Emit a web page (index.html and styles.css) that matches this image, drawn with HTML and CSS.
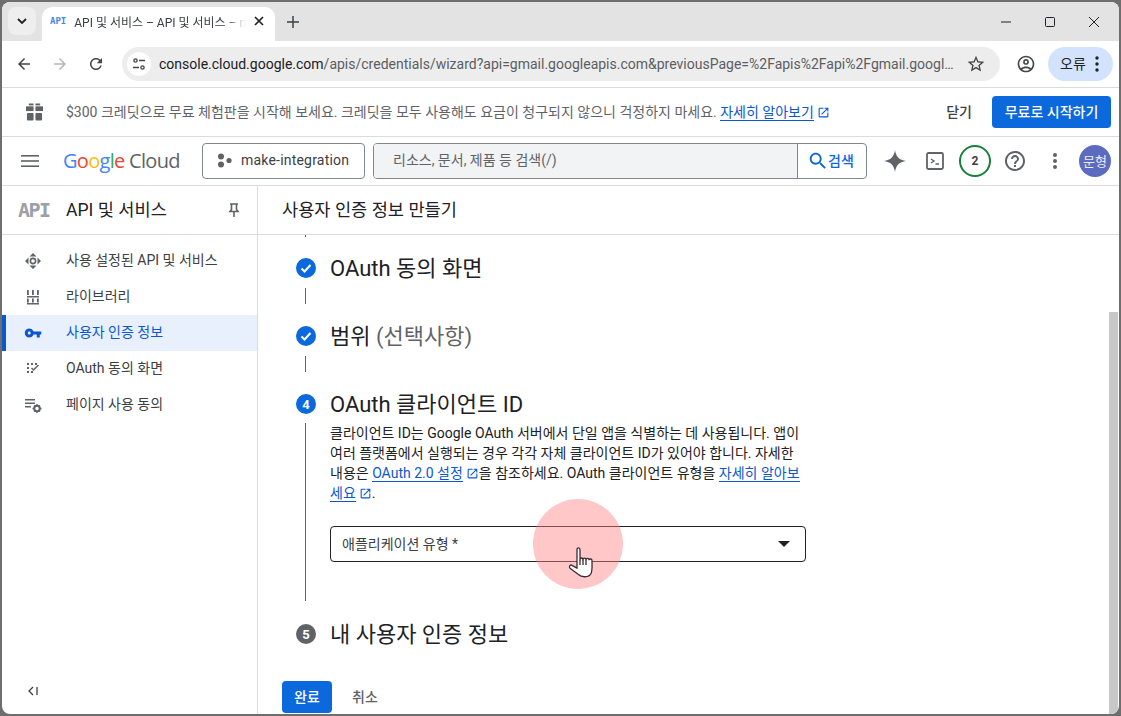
FILE: index.html
```html
<!DOCTYPE html>
<html lang="ko">

<head>
    <meta charset="UTF-8" />
    <meta name="viewport" content="width=device-width, initial-scale=1" />
    <title>API 및 서비스</title>
    <link rel="stylesheet" href="styles.css">
</head>

<body>
    <div class="window">
        <div class="tabstrip">
            <button class="tab-search">
                <svg width="12" height="12" viewBox="0 0 12 12"><path d="M2 4l4 4 4-4" fill="none" stroke="#202124" stroke-width="1.8"/></svg>
            </button>
            <div class="tab">
                <span class="api-mark tab-mark">API</span>
                <span class="tab-title">API 및 서비스 – API 및 서비스 – make-integration</span>
                <svg width="10" height="10" viewBox="0 0 10 10"><path d="M1 1l8 8M9 1l-8 8" stroke="#202124" stroke-width="1.7"/></svg>
            </div>
            <svg class="new-tab" width="12" height="12" viewBox="0 0 12 12"><path d="M6 0v12M0 6h12" stroke="#3c4043" stroke-width="1.5"/></svg>
            <div class="win-controls">
                <svg width="12" height="12" viewBox="0 0 12 12"><path d="M1 6h10" stroke="#202124"/></svg>
                <svg width="12" height="12" viewBox="0 0 12 12"><rect x="1.5" y="1.5" width="9" height="9" rx="1" fill="none" stroke="#202124"/></svg>
                <svg width="12" height="12" viewBox="0 0 12 12"><path d="M1 1l10 10M11 1L1 11" stroke="#202124"/></svg>
            </div>
        </div>

        <div class="toolbar">
            <svg class="nav-icon" width="18" height="18" viewBox="0 0 24 24" fill="#444746"><path d="M20 11H7.83l5.59-5.59L12 4l-8 8 8 8 1.41-1.41L7.83 13H20v-2z"/></svg>
            <svg class="nav-icon" width="18" height="18" viewBox="0 0 24 24" fill="#b4b6b8"><path d="M4 11h12.17l-5.59-5.59L12 4l8 8-8 8-1.41-1.41L16.17 13H4v-2z"/></svg>
            <svg class="nav-icon" width="18" height="18" viewBox="0 0 24 24" fill="#444746"><path d="M17.65 6.35C16.2 4.9 14.21 4 12 4c-4.42 0-7.99 3.58-7.99 8s3.57 8 7.99 8c3.73 0 6.84-2.55 7.73-6h-2.08c-.82 2.33-3.04 4-5.65 4-3.31 0-6-2.69-6-6s2.69-6 6-6c1.66 0 3.14.69 4.22 1.78L13 11h7V4l-2.35 2.35z"/></svg>
            <div class="omnibox">
                <span class="site-chip">
                    <svg width="14" height="14" viewBox="0 0 14 14" fill="none" stroke="#444746" stroke-width="1.4"><circle cx="3.5" cy="3.5" r="1.6"/><path d="M7 3.5h6M1 10.5h6"/><circle cx="10.5" cy="10.5" r="1.6"/></svg>
                </span>
                <span class="url"><span class="url-host">console.cloud.google.com</span>/apis/credentials/wizard?api=gmail.googleapis.com&amp;previousPage=%2Fapis%2Fapi%2Fgmail.googleapis.com</span>
                <svg class="star" width="20" height="20" viewBox="0 0 24 24" fill="#444746"><path d="M22 9.24l-7.19-.62L12 2 9.19 8.63 2 9.24l5.46 4.73L5.82 21 12 17.27 18.18 21l-1.63-7.03L22 9.24zM12 15.4l-3.76 2.27 1-4.28-3.32-2.88 4.38-.38L12 6.1l1.71 4.04 4.38.38-3.32 2.88 1 4.28L12 15.4z"/></svg>
            </div>
            <svg class="profile" width="20" height="20" viewBox="0 0 24 24" fill="#444746"><path d="M12 2C6.48 2 2 6.48 2 12s4.48 10 10 10 10-4.48 10-10S17.52 2 12 2zM7.35 18.5C8.66 17.56 10.26 17 12 17s3.34.56 4.65 1.5c-1.31.94-2.91 1.5-4.65 1.5s-3.34-.56-4.65-1.5zm10.79-1.38C16.45 15.8 14.32 15 12 15s-4.45.8-6.14 2.12C4.7 15.73 4 13.95 4 12c0-4.42 3.58-8 8-8s8 3.58 8 8c0 1.95-.7 3.73-1.86 5.12zM12 6c-1.93 0-3.5 1.57-3.5 3.5S10.07 13 12 13s3.5-1.57 3.5-3.5S13.93 6 12 6zm0 5c-.83 0-1.5-.67-1.5-1.5S11.17 8 12 8s1.5.67 1.5 1.5S12.83 11 12 11z"/></svg>
            <div class="error-pill">
                <span>오류</span>
                <svg width="4" height="16" viewBox="0 0 4 16" fill="#202124"><circle cx="2" cy="2" r="1.7"/><circle cx="2" cy="8" r="1.7"/><circle cx="2" cy="14" r="1.7"/></svg>
            </div>
        </div>

        <div class="banner">
            <svg class="gift" width="17" height="18" viewBox="0 0 18 18" fill="#5f6368"><rect x="0" y="3" width="8" height="5"/><rect x="10" y="3" width="8" height="5"/><rect x="1" y="10" width="7" height="8" rx="1"/><rect x="10" y="10" width="7" height="8" rx="1"/><rect x="3" y="0" width="5" height="2"/><rect x="10" y="0" width="5" height="2"/></svg>
            <p class="banner-text">$300 크레딧으로 무료 체험판을 시작해 보세요. 크레딧을 모두 사용해도 요금이 청구되지 않으니 걱정하지 마세요. <a href="#" class="link">자세히 알아보기</a><svg class="ext" width="13" height="13" viewBox="0 0 24 24" fill="#0b57d0"><path d="M19 19H5V5h7V3H5c-1.11 0-2 .9-2 2v14c0 1.1.89 2 2 2h14c1.1 0 2-.9 2-2v-7h-2v7zM14 3v2h3.59l-9.83 9.83 1.41 1.41L19 6.41V10h2V3h-7z"/></svg></p>
            <span class="banner-close">닫기</span>
            <button class="btn-primary banner-btn">무료로 시작하기</button>
        </div>

        <header class="console-header">
            <svg class="menu" width="18" height="12" viewBox="0 0 18 12" fill="#5f6368"><rect width="18" height="1.6"/><rect y="5.2" width="18" height="1.6"/><rect y="10.4" width="18" height="1.6"/></svg>
            <div class="logo"><span class="g-blue">G</span><span class="g-red">o</span><span class="g-yellow">o</span><span class="g-blue">g</span><span class="g-green">l</span><span class="g-red">e</span><span class="logo-cloud"> Cloud</span></div>
            <div class="project">
                <svg width="15" height="15" viewBox="0 0 15 15" fill="#5f6368"><circle cx="4" cy="3.5" r="3"/><circle cx="4" cy="11.5" r="3"/><circle cx="12" cy="7.5" r="2.6"/></svg>
                <span>make-integration</span>
            </div>
            <div class="search">
                <span class="search-input">리소스, 문서, 제품 등 검색(/)</span>
                <span class="search-btn">
                    <svg width="22" height="22" viewBox="0 0 24 24" fill="#0b68dd"><path d="M15.5 14h-.79l-.28-.27C15.41 12.59 16 11.11 16 9.5 16 5.91 13.09 3 9.5 3S3 5.91 3 9.5 5.91 16 9.5 16c1.61 0 3.09-.59 4.23-1.57l.27.28v.79l5 4.99L20.49 19l-4.99-5zm-6 0C7.01 14 5 11.99 5 9.5S7.01 5 9.5 5 14 7.01 14 9.5 11.99 14 9.5 14z"/></svg>
                    <span class="search-label">검색</span>
                </span>
            </div>
            <div class="header-icons">
                <svg width="24" height="24" viewBox="0 0 24 24" fill="#5f6368"><path d="M12 1C12.8 7.5 16.5 11.2 23 12 16.5 12.8 12.8 16.5 12 23 11.2 16.5 7.5 12.8 1 12 7.5 11.2 11.2 7.5 12 1Z"/></svg>
                <svg width="18" height="18" viewBox="0 0 18 18" fill="none" stroke="#5f6368"><rect x="1" y="1" width="16" height="16" rx="1.5" stroke-width="1.8"/><path d="M5 7l3 2-3 2" stroke-width="1.4"/><path d="M9.5 12H13" stroke-width="1.4"/></svg>
                <span class="badge">2</span>
                <svg width="24" height="24" viewBox="0 0 24 24" fill="#5f6368"><path d="M11 18h2v-2h-2v2zm1-16C6.48 2 2 6.48 2 12s4.48 10 10 10 10-4.48 10-10S17.52 2 12 2zm0 18c-4.41 0-8-3.59-8-8s3.59-8 8-8 8 3.59 8 8-3.59 8-8 8zm0-14c-2.21 0-4 1.79-4 4h2c0-1.1.9-2 2-2s2 .9 2 2c0 2-3 1.75-3 5h2c0-2.25 3-2.5 3-5 0-2.21-1.79-4-4-4z"/></svg>
                <svg width="4" height="16" viewBox="0 0 4 16" fill="#5f6368"><circle cx="2" cy="2" r="2"/><circle cx="2" cy="8" r="2"/><circle cx="2" cy="14" r="2"/></svg>
                <span class="avatar">문형</span>
            </div>
        </header>

        <div class="body-row">
            <aside class="sidebar">
                <div class="side-head">
                    <span class="api-mark side-mark">API</span>
                    <span class="side-title">API 및 서비스</span>
                    <svg class="pin" width="12" height="14" viewBox="0 0 12 14" fill="none" stroke="#5f6368" stroke-width="1.6"><path d="M2 1h8M3.500 1v5.500L2 8.500h8L8.500 6.500V1M6 8.500V14"/></svg>
                </div>
                <nav class="side-nav">
                    <a class="nav-item" href="#">
                        <svg width="18" height="18" viewBox="0 0 18 18" fill="#5f6368"><path d="M9 1l3.500 3.500h-7zM9 17l-3.500-3.500h7zM1 9l3.500-3.500v7zM17 9l-3.500 3.500v-7z"/><circle cx="9" cy="9" r="2.600" fill="none" stroke="#5f6368" stroke-width="1.600"/></svg>
                        <span>사용 설정된 API 및 서비스</span>
                    </a>
                    <a class="nav-item" href="#">
                        <svg width="18" height="18" viewBox="0 0 18 18" fill="#5f6368"><rect x="3" y="2" width="1.800" height="5"/><rect x="8" y="2" width="1.800" height="5"/><rect x="13" y="2" width="1.800" height="5"/><rect x="3" y="8" width="12" height="1.500"/><rect x="3" y="10.500" width="1.800" height="4"/><rect x="8" y="10.500" width="1.800" height="4"/><rect x="13" y="10.500" width="1.800" height="4"/><rect x="3" y="15" width="12" height="1.500"/></svg>
                        <span>라이브러리</span>
                    </a>
                    <a class="nav-item active" href="#">
                        <svg width="18" height="18" viewBox="0 0 24 24" fill="#0b57d0"><path d="M12.650 10C11.830 7.670 9.610 6 7 6c-3.310 0-6 2.690-6 6s2.690 6 6 6c2.610 0 4.830-1.670 5.650-4H17v4h4v-4h2v-4H12.650zM7 14c-1.100 0-2-.900-2-2s.900-2 2-2 2 .900 2 2-.900 2-2 2z"/></svg>
                        <span>사용자 인증 정보</span>
                    </a>
                    <a class="nav-item" href="#">
                        <svg width="18" height="18" viewBox="0 0 18 18" fill="#5f6368"><rect x="3" y="3" width="2" height="2"/><rect x="7" y="3" width="2" height="2"/><rect x="11" y="3" width="2" height="2"/><rect x="3" y="7" width="2" height="2"/><rect x="3" y="11" width="2" height="2"/><rect x="7" y="11" width="2" height="2"/><path d="M7.500 8l2 2 5-5" fill="none" stroke="#5f6368" stroke-width="1.500"/></svg>
                        <span>OAuth 동의 화면</span>
                    </a>
                    <a class="nav-item" href="#">
                        <svg width="18" height="18" viewBox="0 0 18 18" fill="#5f6368"><rect x="1" y="3" width="10" height="1.500"/><rect x="1" y="6.500" width="10" height="1.500"/><rect x="1" y="10" width="6" height="1.500"/><circle cx="13" cy="12.500" r="2.800" fill="none" stroke="#5f6368" stroke-width="2"/><path d="M13 8v2M13 15v2M8.500 12.500h2M15.500 12.500h2M10 9.500l1.200 1.200M14.800 14.300l1.200 1.200M10 15.500l1.200-1.200M14.800 10.700l1.200-1.200" stroke="#5f6368" stroke-width="1.300"/></svg>
                        <span>페이지 사용 동의</span>
                    </a>
                </nav>
                <svg class="collapse" width="10" height="10" viewBox="0 0 10 10" fill="none" stroke="#3c4043" stroke-width="1.300"><path d="M5 1L1 5l4 4M9 1v8"/></svg>
            </aside>

            <main class="main">
                <div class="page-head">사용자 인증 정보 만들기</div>
                <div class="stepper">
                    <span class="line line-top"></span>
                    <div class="step-head">
                        <span class="step-icon done"><svg width="14" height="14" viewBox="0 0 14 14"><path d="M2.500 7.500l3 3 6-6.500" fill="none" stroke="#fff" stroke-width="2"/></svg></span>
                        <h2>OAuth 동의 화면</h2>
                    </div>
                    <span class="line line-short"></span>
                    <div class="step-head">
                        <span class="step-icon done"><svg width="14" height="14" viewBox="0 0 14 14"><path d="M2.500 7.500l3 3 6-6.500" fill="none" stroke="#fff" stroke-width="2"/></svg></span>
                        <h2>범위 <span class="optional">(선택사항)</span></h2>
                    </div>
                    <span class="line line-short"></span>
                    <div class="step-head">
                        <span class="step-icon done">4</span>
                        <h2>OAuth 클라이언트 ID</h2>
                    </div>
                    <div class="step-body">
                        <p class="step-text">클라이언트 ID는 Google OAuth 서버에서 단일 앱을 식별하는 데 사용됩니다. 앱이 여러 플랫폼에서 실행되는 경우 각각 자체 클라이언트 ID가 있어야 합니다. 자세한 내용은 <a href="#" class="link">OAuth 2.0 설정</a><svg class="ext" width="13" height="13" viewBox="0 0 24 24" fill="#0b57d0"><path d="M19 19H5V5h7V3H5c-1.110 0-2 .900-2 2v14c0 1.100.890 2 2 2h14c1.100 0 2-.900 2-2v-7h-2v7zM14 3v2h3.590l-9.830 9.830 1.410 1.410L19 6.410V10h2V3h-7z"/></svg>을 참조하세요. OAuth 클라이언트 유형을 <a href="#" class="link">자세히 알아보세요</a><svg class="ext" width="13" height="13" viewBox="0 0 24 24" fill="#0b57d0"><path d="M19 19H5V5h7V3H5c-1.110 0-2 .900-2 2v14c0 1.100.890 2 2 2h14c1.100 0 2-.900 2-2v-7h-2v7zM14 3v2h3.590l-9.830 9.830 1.410 1.410L19 6.410V10h2V3h-7z"/></svg>.</p>
                        <div class="select">
                            <span class="select-label">애플리케이션 유형 *</span>
                            <span class="caret"></span>
                        </div>
                    </div>
                    <div class="step-head step-last">
                        <span class="step-icon pending">5</span>
                        <h2>내 사용자 인증 정보</h2>
                    </div>
                </div>
                <div class="actions">
                    <button class="btn-primary">완료</button>
                    <span class="btn-text">취소</span>
                </div>
            </main>
        </div>

        <div class="scrollbar"></div>

        <div class="click-ring"></div>
        <svg class="hand" width="26" height="37" viewBox="0 0 26 35" preserveAspectRatio="none" fill="#fff" stroke="#3c2a2e" stroke-width="1.300" stroke-linejoin="round"><path d="M9 21V3.500C9 1.200 12 1.200 12 3.500V13c0-2.200 3-2.200 3 0 0-2 3-2 3 0 0-1.800 3-1.800 3 0 .8-1.200 3-1 3 1 0 4 .5 9-1 12-2 4-9.500 4-12.500 1L2 21c-1.500-2 .5-4 2.500-2.500z"/><path d="M12 13v5M15 13v5M18 13v5" fill="none"/></svg>
    </div>
</body>

</html>
```

FILE: styles.css
```css
* {
    box-sizing: border-box;
}

html,
body {
    margin: 0;
    height: 100%;
    overflow: hidden;
}

body {
    background-color: #6e6e6e;
    font-family: Roboto, "Noto Sans CJK KR", sans-serif;
    color: #202124;
}

h2,
p {
    margin: 0;
    font-weight: 400;
}

a {
    text-decoration: none;
}

button {
    border: none;
    font-family: inherit;
}

.window {
    position: relative;
    width: 1117px;
    height: 712px;
    margin: 2px;
    background-color: #fff;
    border-radius: 8px;
    overflow: hidden;
}

/* browser tabs */

.tabstrip {
    display: flex;
    align-items: center;
    height: 39px;
    padding: 5px 0 0 6px;
    background-color: #e3e3e3;
}

.tab-search {
    display: flex;
    align-items: center;
    justify-content: center;
    width: 28px;
    height: 28px;
    margin-top: -6px;
    background-color: #eeeeee;
    border-radius: 8px;
}

.tab {
    display: flex;
    align-items: center;
    gap: 8px;
    width: 233px;
    height: 34px;
    margin-left: 6px;
    padding: 0 11px 6px 8px;
    background-color: #fff;
    border-radius: 10px 10px 0 0;
}

.tab-title {
    flex: 1;
    overflow: hidden;
    white-space: nowrap;
    font-size: 12px;
    color: #3c4043;
    -webkit-mask-image: linear-gradient(to right, #000 88%, transparent);
    mask-image: linear-gradient(to right, #000 88%, transparent);
}

.api-mark {
    font-family: "DejaVu Sans Mono", monospace;
    font-weight: 700;
}

.tab-mark {
    font-size: 9px;
    color: #4285f4;
}

.new-tab {
    margin: -4px 0 0 12px;
}

.win-controls {
    display: flex;
    gap: 32px;
    margin: -4px 19px 0 auto;
}

/* address bar */

.toolbar {
    display: flex;
    align-items: center;
    height: 47px;
    padding: 0 6px 1px 13px;
    background-color: #fff;
    border-bottom: 1px solid #dadce0;
}

.nav-icon {
    margin-right: 18px;
}

.omnibox {
    display: flex;
    align-items: center;
    width: 878px;
    height: 34px;
    margin-left: -1px;
    padding: 0 14px 0 5px;
    background-color: #eeedee;
    border-radius: 17px;
}

.site-chip {
    display: flex;
    flex: none;
    align-items: center;
    justify-content: center;
    width: 24px;
    height: 24px;
    margin-right: 8px;
    background-color: #fff;
    border-radius: 50%;
}

.url {
    flex: 1;
    overflow: hidden;
    white-space: nowrap;
    text-overflow: ellipsis;
    font-size: 14px;
    color: #5b5e61;
}

.url-host {
    color: #202124;
}

.star {
    flex: none;
    margin-left: 10px;
}

.profile {
    margin-left: 16px;
}

.error-pill {
    display: flex;
    align-items: center;
    justify-content: space-between;
    width: 65px;
    height: 34px;
    margin-left: 12px;
    padding: 0 14px 0 12px;
    background-color: #d3e3fd;
    border-radius: 17px;
    font-size: 14px;
}

.error-pill span {
    margin-bottom: 2px;
}

/* free trial banner */

.banner {
    display: flex;
    align-items: center;
    height: 49px;
    padding: 0 8px 0 24px;
    border-bottom: 1px solid #dadce0;
}

.gift {
    flex: none;
}

.banner-text {
    margin: 0 0 3px 23px;
    font-size: 14px;
    color: #5f6368;
}

.link {
    color: #0b57d0;
    border-bottom: 1px solid #0b57d0;
}

.ext {
    margin-left: 3px;
    vertical-align: -2px;
}

.banner-close {
    margin: 0 0 3px auto;
    font-size: 14px;
    font-weight: 500;
    color: #3c4043;
}

.btn-primary {
    height: 32px;
    padding: 0 0 3px;
    background-color: #0b68dd;
    border-radius: 4px;
    font-size: 14px;
    font-weight: 500;
    color: #fff;
}

.banner-btn {
    width: 119px;
    margin-left: 20px;
}

/* console header */

.console-header {
    display: flex;
    align-items: center;
    height: 49px;
    border-bottom: 1px solid #dadce0;
}

.menu {
    margin-left: 19px;
}

.logo {
    width: 139px;
    margin: 0 0 2px 24px;
    font-family: "Open Sans", sans-serif;
    font-size: 20px;
    letter-spacing: -0.7px;
    white-space: pre;
}

.g-blue {
    color: #4285f4;
}

.g-red {
    color: #ea4335;
}

.g-yellow {
    color: #fbbc04;
}

.g-green {
    color: #34a853;
}

.logo-cloud {
    color: #5f6368;
}

.project {
    display: flex;
    align-items: center;
    gap: 9px;
    width: 163px;
    height: 36px;
    padding: 0 0 2px 14px;
    border: 1px solid #80868b;
    border-radius: 4px;
    font-size: 14px;
    letter-spacing: 0.2px;
    color: #3c4043;
}

.search {
    display: flex;
    width: 494px;
    height: 36px;
    margin-left: 8px;
    border: 1px solid #80868b;
    border-radius: 4px;
    overflow: hidden;
}

.search-input {
    flex: 1;
    padding: 5px 0 0 19px;
    background-color: #f1f3f4;
    font-size: 14px;
    color: #5f6368;
}

.search-btn {
    display: flex;
    align-items: center;
    width: 69px;
    padding-left: 9px;
    border-left: 1px solid #80868b;
    font-size: 14px;
    font-weight: 500;
    color: #0b68dd;
}

.search-label {
    margin: 0 0 2px -1px;
}

.header-icons {
    display: grid;
    grid-template-columns: repeat(6, 40px);
    align-items: center;
    justify-items: center;
    margin-left: 8px;
}

.badge {
    display: flex;
    align-items: center;
    justify-content: center;
    width: 32px;
    height: 32px;
    border: 2px solid #188038;
    border-radius: 50%;
    font-size: 12px;
    font-weight: 700;
    color: #3c4043;
}

.avatar {
    display: flex;
    align-items: center;
    justify-content: center;
    width: 32px;
    height: 32px;
    padding-bottom: 2px;
    background-color: #5c6bc0;
    border-radius: 50%;
    font-size: 13px;
    color: #eceefa;
}

/* layout below header */

.body-row {
    display: flex;
    height: 528px;
}

.sidebar {
    position: relative;
    width: 256px;
    border-right: 1px solid #dadce0;
}

.side-head {
    display: flex;
    align-items: center;
    height: 49px;
    padding-left: 16px;
    border-bottom: 1px solid #dadce0;
}

.side-mark {
    width: 32px;
    font-size: 20px;
    letter-spacing: -1.5px;
    color: #9aa0a6;
}

.side-title {
    margin: 0 0 4px 16px;
    font-size: 17.6px;
}

.pin {
    margin-left: auto;
    margin-right: 17px;
}

.side-nav {
    padding-top: 8px;
}

.nav-item {
    display: flex;
    align-items: center;
    height: 36px;
    padding-left: 22px;
    font-size: 14px;
    color: #3c4043;
}

.nav-item span {
    margin: 0 0 4px 24px;
}

.nav-item.active {
    background-color: #e8f0fe;
    border-left: 4px solid #0b57d0;
    padding-left: 18px;
    color: #0b57d0;
}

.collapse {
    position: absolute;
    left: 26px;
    bottom: 18px;
}

.main {
    flex: 1;
    overflow: hidden;
}

.page-head {
    display: flex;
    align-items: center;
    height: 49px;
    padding: 0 0 4px 24px;
    border-bottom: 1px solid #dadce0;
    font-size: 17.6px;
}

/* stepper */

.stepper {
    padding-left: 38px;
}

.step-head {
    display: flex;
    align-items: center;
    height: 40px;
}

.step-head h2 {
    margin: -5px 0 0 14px;
    font-size: 22px;
}

.optional {
    color: #5f6368;
}

.step-icon {
    display: flex;
    align-items: center;
    justify-content: center;
    width: 20px;
    height: 20px;
    border-radius: 50%;
    font-size: 13px;
    font-weight: 700;
    color: #fff;
}

.step-icon.done {
    background-color: #0b68dd;
}

.step-icon.pending {
    background-color: #5f6368;
}

.line {
    display: block;
    width: 1px;
    margin-left: 9px;
    background-color: #5f6368;
}

.line-top {
    height: 2px;
    margin-bottom: 11px;
}

.line-short {
    height: 16px;
    margin-bottom: 12px;
}

.step-body {
    height: 178px;
    margin-left: 9px;
    padding-left: 24px;
    border-left: 1px solid #5f6368;
}

.step-text {
    width: 472px;
    margin-top: -1px;
    font-size: 14px;
    line-height: 20px;
    color: #202124;
}

.select {
    display: flex;
    align-items: center;
    justify-content: space-between;
    width: 476px;
    height: 36px;
    margin-top: 23px;
    padding: 0 15px 0 11px;
    border: 1px solid #202124;
    border-radius: 4px;
    font-size: 14px;
    color: #3c4043;
}

.select-label {
    margin-bottom: 3px;
}

.caret {
    width: 0;
    height: 0;
    border-left: 6px solid transparent;
    border-right: 6px solid transparent;
    border-top: 6px solid #202124;
}

.step-last {
    margin-top: 13px;
}

.actions {
    display: flex;
    align-items: center;
    margin-top: 27px;
    padding-left: 24px;
}

.actions .btn-primary {
    width: 50px;
}

.btn-text {
    margin: 0 0 2px 20px;
    font-size: 14px;
    font-weight: 500;
    color: #5f6368;
}

.scrollbar {
    position: absolute;
    top: 310px;
    right: 1px;
    bottom: 0;
    width: 9px;
    background-color: #c8c8c8;
}

/* click highlight recorded with the pointer */

.click-ring {
    position: absolute;
    left: 531px;
    top: 497px;
    width: 90px;
    height: 90px;
    background-color: rgba(255, 130, 130, 0.45);
    border-radius: 50%;
}

.hand {
    position: absolute;
    left: 566px;
    top: 544px;
}
```
